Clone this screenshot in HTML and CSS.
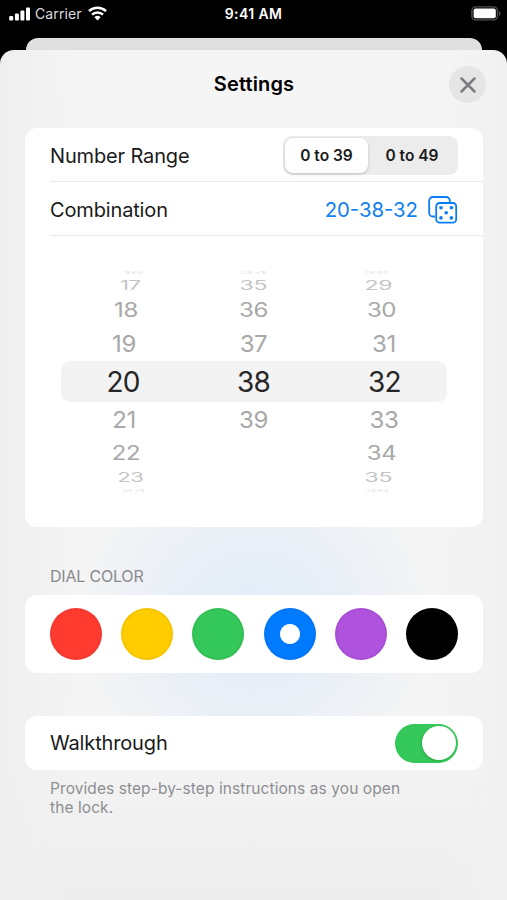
FILE: index.html
```html
<!DOCTYPE html>
<html lang="en">
<head>
  <title>Settings</title>
  <meta charset="UTF-8">
  <link rel="stylesheet" href="styles.css">
</head>
<body>
  <div class="status-bar">
    <div class="status-left">
      <svg class="signal" width="23" height="14" viewBox="0 0 23 14" fill="#fff">
        <rect x="0.2" y="9" width="4" height="4.5" rx="1"/>
        <rect x="5.9" y="6.5" width="4" height="7" rx="1"/>
        <rect x="11.4" y="3.5" width="4" height="10" rx="1"/>
        <rect x="17" y="0.5" width="4" height="13" rx="1"/>
      </svg>
      <span class="carrier">Carrier</span>
      <svg class="wifi" width="19" height="15" viewBox="0 0 19 15" fill="none" stroke="#fff" stroke-width="2.5">
        <path d="M1 5.2a12.3 12.3 0 0 1 17 0"/>
        <path d="M4 8.7a8 8 0 0 1 11 0"/>
        <path d="M9.5 14.4L6.4 11.3a4.5 4.5 0 0 1 6.2 0z" fill="#fff" stroke="none"/>
      </svg>
    </div>
    <div class="status-time">9:41 AM</div>
    <div class="status-right">
      <svg width="30" height="15" viewBox="0 0 30 15">
        <rect x="0.9" y="0.9" width="25.6" height="13" rx="4" fill="none" stroke="#505050" stroke-width="1.4"/>
        <rect x="2.6" y="2.6" width="22.2" height="9.6" rx="2" fill="#fff"/>
        <path d="M28 5v5q1.6-.8 1.6-2.5T28 5z" fill="#505050"/>
      </svg>
    </div>
  </div>

  <div class="back-sheet"></div>

  <div class="sheet">
    <div class="header">
      <h1>Settings</h1>
      <button class="close-btn">
        <svg width="16" height="16" viewBox="0 0 16 16" stroke="#7c7c80" stroke-width="2.5" stroke-linecap="round">
          <path d="M1.5 1.5l13 13M14.5 1.5l-13 13"/>
        </svg>
      </button>
    </div>

    <div class="card lock-card">
      <div class="row">
        <span class="label">Number Range</span>
        <div class="segmented">
          <span class="segment selected">0 to 39</span>
          <span class="segment">0 to 49</span>
        </div>
      </div>
      <div class="row">
        <span class="label">Combination</span>
        <div class="combination">
          <span>20-38-32</span>
          <svg width="30" height="28" viewBox="0 0 30 28" fill="none" stroke="#0a7cf5" stroke-width="1.8">
            <path d="M7 20.5H4.8a3.6 3.6 0 0 1-3.6-3.6V4.6A3.6 3.6 0 0 1 4.8 1h13.4a3.6 3.6 0 0 1 3.6 3.6V6"/>
            <rect x="8.2" y="7" width="20" height="19.6" rx="3.4"/>
            <g fill="#0a7cf5" stroke="none">
              <circle cx="13" cy="11.8" r="1.8"/>
              <circle cx="23.4" cy="11.8" r="1.8"/>
              <circle cx="18.2" cy="16.8" r="1.8"/>
              <circle cx="13" cy="21.9" r="1.8"/>
              <circle cx="23.4" cy="21.9" r="1.8"/>
            </g>
          </svg>
        </div>
      </div>
      <div class="picker">
        <div class="wheel wheel-left">
          <div class="far"><span>16</span></div>
          <div class="third"><span>17</span></div>
          <div class="second"><span>18</span></div>
          <div class="first"><span>19</span></div>
          <div class="current"><span>20</span></div>
          <div class="first"><span>21</span></div>
          <div class="second"><span>22</span></div>
          <div class="third"><span>23</span></div>
          <div class="far"><span>24</span></div>
        </div>
        <div class="wheel wheel-middle">
          <div class="far"><span>34</span></div>
          <div class="third"><span>35</span></div>
          <div class="second"><span>36</span></div>
          <div class="first"><span>37</span></div>
          <div class="current"><span>38</span></div>
          <div class="first"><span>39</span></div>
        </div>
        <div class="wheel wheel-right">
          <div class="far"><span>28</span></div>
          <div class="third"><span>29</span></div>
          <div class="second"><span>30</span></div>
          <div class="first"><span>31</span></div>
          <div class="current"><span>32</span></div>
          <div class="first"><span>33</span></div>
          <div class="second"><span>34</span></div>
          <div class="third"><span>35</span></div>
          <div class="far"><span>36</span></div>
        </div>
      </div>
    </div>

    <h2>DIAL COLOR</h2>
    <div class="card colors">
      <span class="dot red"></span>
      <span class="dot yellow"></span>
      <span class="dot green"></span>
      <span class="dot blue"></span>
      <span class="dot purple"></span>
      <span class="dot black"></span>
    </div>

    <div class="card walkthrough">
      <span class="label">Walkthrough</span>
      <span class="switch"><span class="knob"></span></span>
    </div>
    <p class="note">Provides step-by-step instructions as you open<br>the lock.</p>
  </div>
</body>
</html>
```
FILE: styles.css
```css
* {
  box-sizing: border-box;
}

body {
  margin: 0;
  height: 900px;
  display: flex;
  flex-direction: column;
  overflow: hidden;
  background-color: #000;
  color: #1a1a1a;
  font-family: Inter, "Liberation Sans", sans-serif;
}

svg {
  display: block;
}

.status-bar {
  display: grid;
  grid-template-columns: 1fr auto 1fr;
  align-items: center;
  height: 38px;
  padding: 0 6px 11px 9px;
  color: #fff;
  font-size: 14px;
}

.status-left {
  display: flex;
  align-items: center;
}

.carrier {
  margin: 0 6px 0 3px;
  color: #ddd;
  letter-spacing: 0.1px;
}

.status-time {
  margin-right: 3px;
  font-weight: 600;
  letter-spacing: 0.4px;
}

.status-right {
  display: flex;
  justify-content: flex-end;
}

.back-sheet {
  height: 12px;
  margin: 0 25px 0 26px;
  background-color: #dfdfdf;
  border-radius: 12px 12px 0 0;
}

.sheet {
  flex: 1;
  padding: 0 24px 0 25px;
  border-radius: 14px 14px 0 0;
  background:
    radial-gradient(ellipse 180px 170px at 255px 570px, #e2ecf8 0%, rgba(228, 237, 248, 0.8) 40%, rgba(242, 243, 244, 0) 100%),
    linear-gradient(90deg, #efefef 0, rgba(245, 245, 245, 0) 80px, rgba(245, 245, 245, 0) 430px, #f1f1f1 100%),
    linear-gradient(#f5f5f5 0, #f4f4f4 700px, #ededed 850px);
}

.header {
  position: relative;
  display: flex;
  justify-content: center;
  align-items: center;
  height: 78px;
  padding-bottom: 11px;
}

h1 {
  margin: 0;
  color: #000;
  font-size: 20px;
  font-weight: 600;
  letter-spacing: 0.15px;
}

.close-btn {
  position: absolute;
  top: 16px;
  right: -3px;
  display: flex;
  justify-content: center;
  align-items: center;
  width: 37px;
  height: 37px;
  padding: 0;
  border: none;
  border-radius: 50%;
  background-color: #e5e5e5;
}

.card {
  background-color: #fff;
  border-radius: 12px;
}

.lock-card {
  height: 399px;
}

.row {
  display: flex;
  justify-content: space-between;
  align-items: center;
  height: 54px;
  margin-left: 25px;
  padding: 2px 25px 0 0;
  border-bottom: 1px solid #e9e9e9;
}

.label {
  font-size: 20px;
  letter-spacing: -0.15px;
}

.segmented {
  display: flex;
  width: 175px;
  height: 39px;
  padding: 2px;
  border-radius: 9px;
  background-color: #ececec;
  font-size: 15.5px;
  font-weight: 600;
}

.segment {
  flex: 1;
  line-height: 35px;
  text-align: center;
}

.segment.selected {
  flex: none;
  width: 83px;
  border-radius: 8px;
  background-color: #fff;
  box-shadow: 0 1px 3px rgba(0, 0, 0, 0.2);
}

.combination {
  display: flex;
  align-items: center;
  gap: 10px;
  color: #0f7ff2;
  font-size: 20.3px;
}

.picker {
  display: grid;
  grid-template-columns: 124px 137px 125px;
  width: 386px;
  margin: 32px 0 0 36px;
}

.wheel {
  color: #a8a8a8;
  font-size: 24px;
  letter-spacing: -0.4px;
}

.wheel div {
  display: flex;
  justify-content: center;
  align-items: center;
}

.wheel .current {
  height: 41px;
  background-color: #f3f3f3;
  color: #262626;
  font-size: 28px;
  letter-spacing: -0.8px;
}

.wheel-left .current {
  border-radius: 9px 0 0 9px;
}

.wheel-right .current {
  border-radius: 0 9px 9px 0;
}

.first {
  height: 35px;
}

.second {
  height: 32px;
}

.third {
  height: 17px;
  color: #c4c4c4;
}

/* sliver of the number that has almost rolled out of view */
.far {
  height: 9px;
  color: #e6e6e6;
}

.first span {
  transform: scaleY(0.98);
}

.second span {
  transform: scaleY(0.82);
}

.third span {
  transform: scaleY(0.52);
}

.far span {
  transform: scaleY(0.14);
}

.wheel-left .first span {
  transform: translateX(1px) scaleY(0.98);
}

.wheel-left .second span {
  transform: translateX(3px) scaleY(0.82);
}

.wheel-left .third span {
  transform: translateX(7px) scale(0.92, 0.52);
}

.wheel-left .far span {
  transform: translateX(10px) scale(0.9, 0.14);
}

.wheel-middle .third span {
  transform: scale(0.96, 0.52);
}

.wheel-right .first span {
  transform: translateX(-0.5px) scaleY(0.98);
}

.wheel-right .second span {
  transform: translateX(-3px) scaleY(0.82);
}

.wheel-right .third span {
  transform: translateX(-6px) scale(0.96, 0.52);
}

.wheel-right .far span {
  transform: translateX(-8px) scale(0.9, 0.14);
}

h2 {
  margin: 0;
  padding: 39px 0 9px 25px;
  color: #8a8a8e;
  font-size: 16px;
  font-weight: 400;
  letter-spacing: -0.2px;
  line-height: 20px;
}

.colors {
  display: flex;
  justify-content: space-between;
  align-items: center;
  height: 78px;
  padding: 0 25px;
}

.dot {
  width: 52px;
  height: 52px;
  border: 2px solid rgba(0, 0, 0, 0.04);
  border-radius: 50%;
}

.red { background-color: #ff3b30; }
.yellow { background-color: #ffcc00; }
.green { background-color: #34c759; }
.blue { background: radial-gradient(circle, #fff 9.5px, #007aff 10.5px); }
.purple { background-color: #af52de; }
.black { background-color: #000; }

.walkthrough {
  display: flex;
  justify-content: space-between;
  align-items: center;
  height: 54px;
  margin-top: 43px;
  padding: 0 25px;
}

.switch {
  display: flex;
  justify-content: flex-end;
  width: 63px;
  height: 39px;
  padding: 2.5px;
  border-radius: 20px;
  background-color: #34c759;
}

.knob {
  width: 34px;
  height: 34px;
  border-radius: 50%;
  background-color: #fff;
  box-shadow: -1px 1px 2px rgba(0, 0, 0, 0.15);
}

.note {
  margin: 9px 0 0 25px;
  color: #8e8e92;
  font-size: 15.5px;
  letter-spacing: 0.08px;
  line-height: 19px;
}
```
